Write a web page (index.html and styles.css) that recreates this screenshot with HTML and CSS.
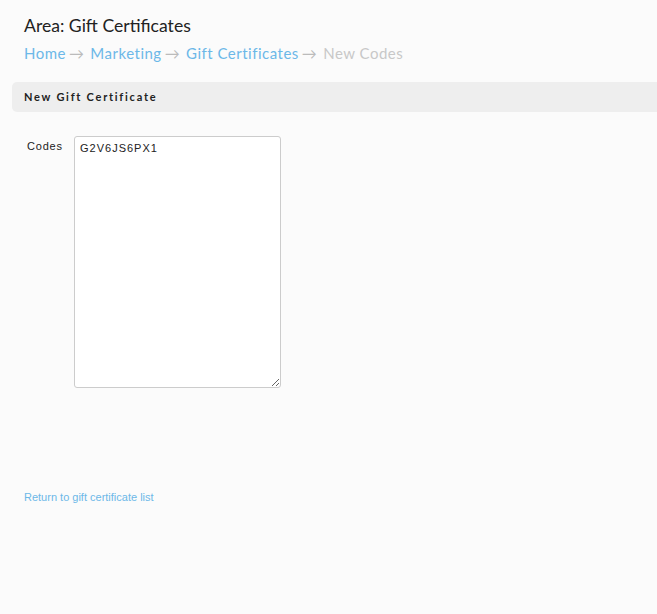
FILE: index.html
```html
<!DOCTYPE html>
<html>

<head>
    <title>Gift Certificates - New Codes</title>
    <link rel="stylesheet" href="styles.css">
</head>

<body>
    <div class="page">
        <div class="head">
            <h1>Area: Gift Certificates</h1>
            <div class="crumbs">
                <a href="#">Home</a><span class="arr">&rarr;</span>
                <a href="#">Marketing</a><span class="arr">&rarr;</span>
                <a href="#">Gift Certificates</a><span class="arr">&rarr;</span>
                <span class="here">New Codes</span>
            </div>
        </div>

        <div class="panel">
            <div class="panel-title">New Gift Certificate</div>
            <div class="row">
                <label for="codes">Codes</label>
                <textarea id="codes">G2V6JS6PX1</textarea>
            </div>
        </div>

        <a class="back" href="#">Return to gift certificate list</a>
    </div>
</body>

</html>
```

FILE: styles.css
```css
body {
    margin: 0;
    background: #fbfbfb;
    font-family: "Liberation Sans", Arial, sans-serif;
}

.page {
    padding: 0 0 0 12px;
}

.head {
    padding: 14px 12px 0 12px;
}

h1 {
    margin: 0;
    font-family: Lato, sans-serif;
    font-weight: normal;
    font-size: 17.6px;
    line-height: 24px;
    color: #222;
}

.crumbs {
    margin-top: 5px;
    font-family: Lato, sans-serif;
    font-size: 15px;
    line-height: 20px;
    letter-spacing: 0.5px;
}

.crumbs a {
    color: #6cb8e8;
    text-decoration: none;
}

.crumbs .arr {
    color: #bbb;
    letter-spacing: 0;
    margin: 0 2px 0 3px;
}

.crumbs .here {
    color: #c8c8c8;
}

.panel {
    margin-top: 19px;
}

.panel-title {
    height: 30px;
    line-height: 30px;
    background: #eeeeee;
    border-radius: 5px 0 0 5px;
    padding-left: 12px;
    font-family: Lato, sans-serif;
    font-weight: bold;
    font-size: 11px;
    letter-spacing: 1.75px;
    color: #222;
}

.row {
    display: flex;
    align-items: flex-start;
    padding: 24px 0 0 15px;
}

.row label {
    width: 47px;
    padding-top: 4px;
    font-size: 11px;
    letter-spacing: 0.8px;
    color: #222;
}

.row textarea {
    width: 207px;
    height: 252px;
    box-sizing: border-box;
    margin: 0;
    padding: 5px 5px;
    border: 1px solid #ccc;
    border-radius: 3px;
    background: #fff;
    font-family: "Liberation Sans", Arial, sans-serif;
    font-size: 11px;
    letter-spacing: 1px;
    color: #222;
    outline: none;
}

.back {
    display: block;
    margin: 103px 0 0 12px;
    font-size: 11px;
    color: #6cb8e8;
    text-decoration: none;
}
```
